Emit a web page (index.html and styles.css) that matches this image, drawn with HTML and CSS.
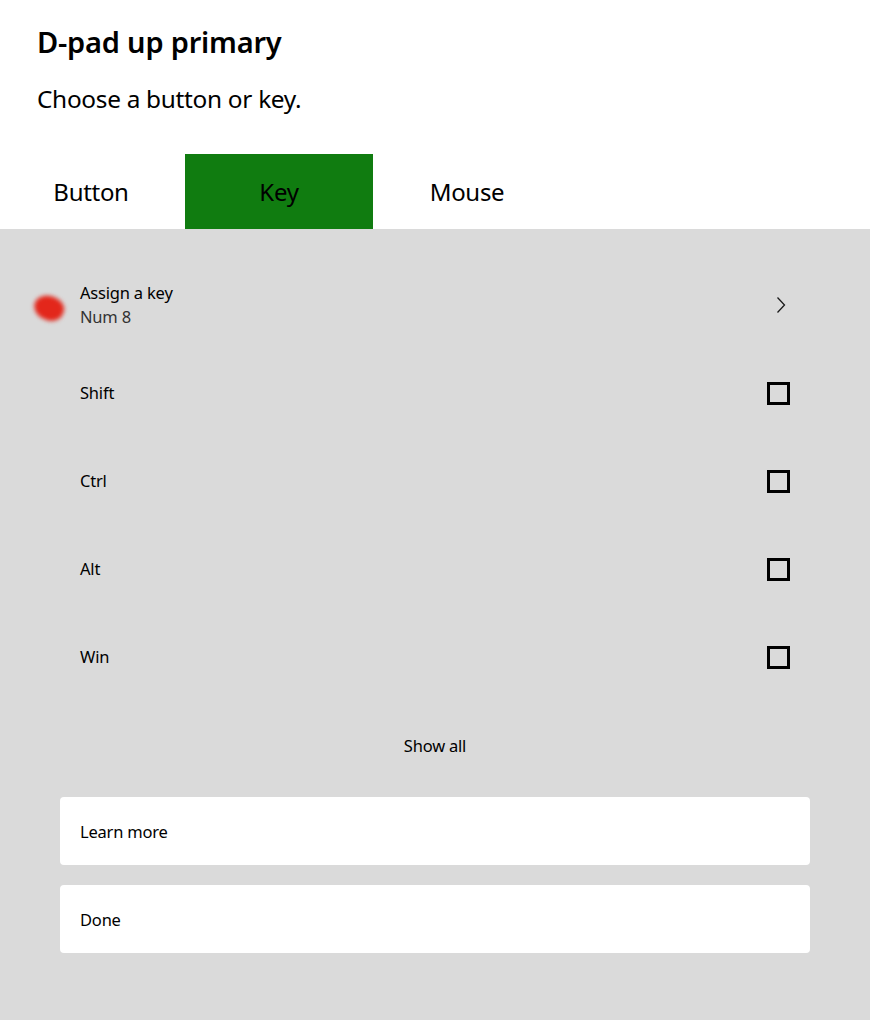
FILE: index.html
```html
<!DOCTYPE html>
<html>
<head>
<meta charset="utf-8">
<link rel="stylesheet" href="styles.css">
</head>
<body>
<div class="page">
  <header class="head">
    <h1 class="title">D-pad up primary</h1>
    <p class="subtitle">Choose a button or key.</p>
  </header>
  <nav class="tabs">
    <div class="tab tab-first">Button</div>
    <div class="tab tab-active">Key</div>
    <div class="tab">Mouse</div>
  </nav>
  <section class="panel">
    <div class="row row-assign">
      <div class="lead"><span class="blob"></span></div>
      <div class="row-text">
        <div class="row-label">Assign a key</div>
        <div class="row-sub">Num 8</div>
      </div>
      <svg class="chev" width="12" height="18" viewBox="0 0 12 18"><path d="M2.5 1.5 L9.5 9 L2.5 16.5" fill="none" stroke="#1a1a1a" stroke-width="1.3"/></svg>
    </div>
    <div class="row"><div class="lead"></div><div class="row-label grow">Shift</div><span class="check"></span></div>
    <div class="row"><div class="lead"></div><div class="row-label grow">Ctrl</div><span class="check"></span></div>
    <div class="row"><div class="lead"></div><div class="row-label grow">Alt</div><span class="check"></span></div>
    <div class="row"><div class="lead"></div><div class="row-label grow">Win</div><span class="check"></span></div>
    <div class="show-all">Show all</div>
    <div class="buttons">
      <div class="btn">Learn more</div>
      <div class="btn">Done</div>
    </div>
  </section>
</div>
</body>
</html>
```
FILE: styles.css
```css
html, body {
  margin: 0;
  padding: 0;
  background: #dadada;
}
body {
  font-family: "Noto Sans", "Open Sans", sans-serif;
  color: #000;
}
.page {
  width: 870px;
  height: 1020px;
  display: flex;
  flex-direction: column;
  background: #dadada;
  overflow: hidden;
}
.head {
  background: #fff;
  padding: 23px 0 0 37px;
}
.title {
  margin: 0;
  font-size: 29px;
  font-weight: 600;
  line-height: 38px;
  letter-spacing: -0.2px;
}
.subtitle {
  margin: 22px 0 0;
  font-size: 24.4px;
  line-height: 32px;
  letter-spacing: -0.3px;
}
.tabs {
  display: flex;
  background: #fff;
  padding-top: 39px;
}
.tab {
  width: 188px;
  height: 75px;
  display: flex;
  align-items: center;
  justify-content: center;
  font-size: 24px;
  letter-spacing: -0.3px;
  color: #000;
}
.tab-first {
  width: 185px;
  padding-right: 3px;
  box-sizing: border-box;
}
.tab-active {
  background: #107c10;
}
.panel {
  flex: 1;
  padding-top: 32px;
  display: flex;
  flex-direction: column;
}
.row {
  height: 88px;
  display: flex;
  align-items: center;
  padding-right: 80px;
}
.lead {
  width: 80px;
  height: 40px;
  flex: none;
  display: flex;
  align-items: center;
}
.blob {
  display: block;
  width: 30px;
  height: 24px;
  margin-left: 34px;
  margin-top: 6px;
  border-radius: 55% 45% 50% 50%;
  background: #e3271b;
  filter: blur(2px);
  transform: rotate(25deg);
}
.row-text {
  flex: 1;
  display: flex;
  flex-direction: column;
}
.row-label {
  font-size: 16.5px;
  line-height: 24px;
  color: #000;
  letter-spacing: -0.2px;
}
.row-sub {
  font-size: 16.5px;
  line-height: 24px;
  color: #333;
  letter-spacing: -0.2px;
}
.grow {
  flex: 1;
}
.chev {
  margin-right: 3px;
}
.check {
  width: 17px;
  height: 17px;
  border: 3px solid #000;
  margin-right: 0;
  box-sizing: content-box;
}
.show-all {
  height: 88px;
  display: flex;
  align-items: center;
  justify-content: center;
  font-size: 16.5px;
  letter-spacing: -0.2px;
}
.buttons {
  margin: 8px 60px 0;
  display: flex;
  flex-direction: column;
  gap: 20px;
}
.btn {
  height: 68px;
  background: #fff;
  border-radius: 4px;
  display: flex;
  align-items: center;
  padding-left: 20px;
  font-size: 16.5px;
  letter-spacing: -0.2px;
}
```
